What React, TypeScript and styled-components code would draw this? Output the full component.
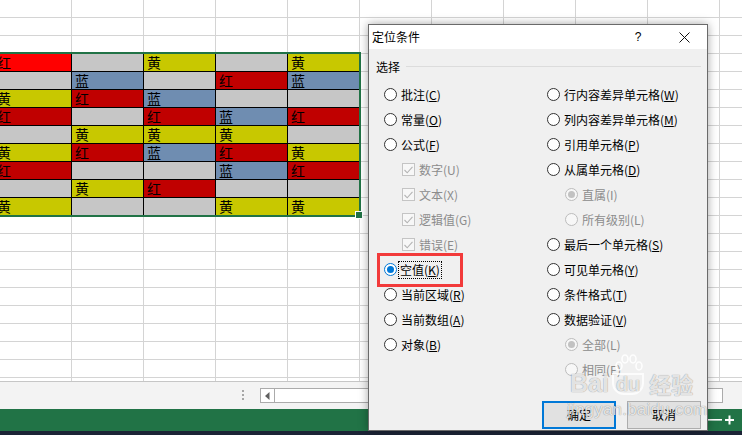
import React from "react";
import styled, { createGlobalStyle } from "styled-components";

const GlobalStyle = createGlobalStyle`
  html, body { margin: 0; padding: 0; background: #fff; }
  body { font-family: "Noto Sans CJK SC", "Noto Sans", sans-serif; }
`;

const CJK = `"Noto Sans CJK SC", "Noto Sans", sans-serif`;

const Screen = styled.div`
  position: relative;
  width: 742px;
  height: 435px;
  overflow: hidden;
  display: flex;
  flex-direction: column;
  background: #fff;
`;

const GridArea = styled.div`
  position: relative;
  height: 381px;
  flex: none;
  overflow: hidden;
`;

const Sheet = styled.div`
  display: grid;
  grid-template-columns: 78px repeat(10, 72px);
  grid-auto-rows: 18px;
  margin-left: -6px;
`;

const Cell = styled.div<{ $fill?: string; $data?: boolean }>`
  box-sizing: border-box;
  border-right: 1px solid ${(p) => (p.$data ? "#000" : "#d4d4d4")};
  border-bottom: 1px solid ${(p) => (p.$data ? "#000" : "#d4d4d4")};
  background: ${(p) => p.$fill || "#fff"};
  padding-left: 3px;
  font: 14px/17px ${CJK};
  color: #000;
  white-space: nowrap;
`;

const Selection = styled.div`
  position: absolute;
  left: -4px;
  top: 52px;
  width: 365px;
  height: 165px;
  box-sizing: border-box;
  border: 2px solid #217346;
  pointer-events: none;
`;

const FillHandle = styled.div`
  position: absolute;
  right: -4px;
  bottom: -4px;
  width: 6px;
  height: 6px;
  background: #217346;
  border: 1px solid #fff;
`;

const ScrollStrip = styled.div`
  height: 27px;
  flex: none;
  border-top: 1px solid #c6c6c6;
  background: #f3f3f3;
  display: flex;
  align-items: center;
  padding: 0 19px 0 242px;
`;

const Grip = styled.div`
  display: flex;
  flex-direction: column;
  gap: 2px;
  margin-top: -2px;
  span {
    width: 2px;
    height: 2px;
    background: #a6a6a6;
  }
`;

const ScrollBox = styled.div`
  flex: 1;
  height: 15px;
  margin-left: 16px;
  box-sizing: border-box;
  border: 1px solid #ababab;
  background: #fff;
  display: flex;
`;

const ScrollArrow = styled.div`
  width: 13px;
  border-right: 1px solid #ababab;
  display: flex;
  align-items: center;
  justify-content: center;
`;

const StatusBar = styled.div`
  height: 22px;
  flex: none;
  background: #217346;
  display: flex;
  align-items: center;
  justify-content: flex-end;
  padding-right: 8px;
`;

const Taskbar = styled.div`
  height: 4px;
  flex: none;
  background: #1c2436;
`;

const Dialog = styled.div`
  position: absolute;
  left: 368px;
  top: 24px;
  width: 340px;
  height: 407px;
  box-sizing: border-box;
  border: 1px solid #6a6a6a;
  background: #f0f0f0;
  box-shadow: 0 0 9px rgba(0, 0, 0, 0.35);
  display: flex;
  flex-direction: column;
  font: 12px/16px ${CJK};
  color: #000;
`;

const TitleBar = styled.div`
  height: 24px;
  flex: none;
  background: #fff;
  display: flex;
  align-items: center;
`;

const Title = styled.div`
  flex: 1;
  padding-left: 3px;
  font-size: 12px;
`;

const TitleButton = styled.div`
  width: 46px;
  height: 24px;
  display: flex;
  align-items: center;
  justify-content: center;
  font: 12px "Liberation Sans", sans-serif;
`;

const Body = styled.div`
  flex: 1;
  display: flex;
  flex-direction: column;
  padding: 0 6px 0 7px;
`;

const GroupHeader = styled.div`
  margin-top: 10px;
  height: 15px;
  display: flex;
  align-items: center;
  gap: 6px;
  line-height: 15px;
  &::after {
    content: "";
    flex: 1;
    height: 1px;
    background: #dcdcdc;
  }
`;

const Options = styled.div`
  display: flex;
  margin-top: 8px;
  padding-left: 8px;
`;

const Column = styled.div<{ $width?: number }>`
  display: flex;
  flex-direction: column;
  ${(p) => (p.$width ? `width: ${p.$width}px;` : "flex: 1;")}
`;

const OptionRow = styled.div<{ $indent?: boolean; $disabled?: boolean }>`
  height: 25px;
  display: flex;
  align-items: center;
  gap: 4px;
  padding-left: ${(p) => (p.$indent ? 18 : 0)}px;
  color: ${(p) => (p.$disabled ? "#8c8c8c" : "#000")};
  white-space: nowrap;
`;

const RadioCircle = styled.span<{ $checked?: boolean; $disabled?: boolean }>`
  width: 13px;
  height: 13px;
  flex: none;
  box-sizing: border-box;
  border-radius: 50%;
  border: 1px solid ${(p) => (p.$disabled ? "#bcbcbc" : p.$checked ? "#0078d7" : "#333")};
  background: ${(p) => (p.$disabled ? "#f7f7f7" : "#fff")};
  display: flex;
  align-items: center;
  justify-content: center;
  &::after {
    content: "";
    width: 7px;
    height: 7px;
    border-radius: 50%;
    background: ${(p) => (p.$disabled ? "#c2c2c2" : "#0078d7")};
    display: ${(p) => (p.$checked ? "block" : "none")};
  }
`;

const CheckBox = styled.span`
  width: 13px;
  height: 13px;
  flex: none;
  box-sizing: border-box;
  border: 1px solid #c4c4c4;
  background: #f7f7f7;
  display: flex;
  align-items: center;
  justify-content: center;
`;

const Focus = styled.span`
  outline: 1px dotted #000;
  outline-offset: 0px;
  padding: 0 1px;
  margin-left: -2px;
`;

const Key = styled.u`
  text-underline-offset: 1px;
`;

const Buttons = styled.div`
  display: flex;
  justify-content: flex-end;
  gap: 11px;
  margin-top: 19px;
`;

const Button = styled.div<{ $default?: boolean }>`
  width: 74px;
  height: 28px;
  box-sizing: border-box;
  background: #e1e1e1;
  border: ${(p) => (p.$default ? "2px solid #0078d7" : "1px solid #adadad")};
  display: flex;
  align-items: center;
  justify-content: center;
`;

const Highlight = styled.div`
  position: absolute;
  left: 8px;
  top: 228px;
  width: 86px;
  height: 34px;
  box-sizing: border-box;
  border: 3px solid #f23a3a;
  pointer-events: none;
`;

const Watermark = styled.div`
  position: absolute;
  left: 570px;
  top: 352px;
  pointer-events: none;
  color: rgba(255, 255, 255, 0.8);
  text-shadow: 0 0 1px rgba(0, 0, 0, 0.28), 0 0 1px rgba(0, 0, 0, 0.28);
  font-family: "Liberation Sans", sans-serif;
  display: flex;
  flex-direction: column;
`;

const MarkTop = styled.div`
  display: flex;
  align-items: flex-end;
  height: 43px;
  font-size: 25px;
  font-weight: bold;
  line-height: 24px;
`;

const MarkDu = styled.span`
  position: relative;
  margin: 0 3px;
  padding: 0 2px;
  border: 2px solid rgba(255, 255, 255, 0.8);
  border-radius: 0 0 12px 12px;
  font-size: 20px;
  line-height: 18px;
  svg {
    position: absolute;
    left: 0;
    bottom: 20px;
  }
`;

const MarkCn = styled.span`
  font: bold 22px/24px ${CJK};
  margin-left: 2px;
`;

const MarkUrl = styled.div`
  font-size: 17px;
  line-height: 20px;
  margin-top: 5px;
  margin-left: -3px;
  letter-spacing: 0.2px;
`;

const fills: Record<string, string> = {
  R: "#ff0000",
  r: "#c00000",
  y: "#c8c800",
  b: "#6f8db1",
  g: "#c6c6c6",
};
const words: Record<string, string> = { R: "红", r: "红", y: "黄", b: "蓝", g: "" };

const data = [
  "Rgygy",
  "gbgrb",
  "yrbgg",
  "rgrbr",
  "gyyyg",
  "yrbry",
  "rggbr",
  "gyrgg",
  "yggyy",
].map((r) => r.split(""));

type Opt = {
  label: string;
  k: string;
  check?: boolean;
  indent?: boolean;
  disabled?: boolean;
  checked?: boolean;
  focus?: boolean;
};

const leftOpts: Opt[] = [
  { label: "批注", k: "C" },
  { label: "常量", k: "O" },
  { label: "公式", k: "F" },
  { label: "数字", k: "U", check: true, indent: true, disabled: true },
  { label: "文本", k: "X", check: true, indent: true, disabled: true },
  { label: "逻辑值", k: "G", check: true, indent: true, disabled: true },
  { label: "错误", k: "E", check: true, indent: true, disabled: true },
  { label: "空值", k: "K", checked: true, focus: true },
  { label: "当前区域", k: "R" },
  { label: "当前数组", k: "A" },
  { label: "对象", k: "B" },
];

const rightOpts: Opt[] = [
  { label: "行内容差异单元格", k: "W" },
  { label: "列内容差异单元格", k: "M" },
  { label: "引用单元格", k: "P" },
  { label: "从属单元格", k: "D" },
  { label: "直属", k: "I", indent: true, disabled: true, checked: true },
  { label: "所有级别", k: "L", indent: true, disabled: true },
  { label: "最后一个单元格", k: "S" },
  { label: "可见单元格", k: "Y" },
  { label: "条件格式", k: "T" },
  { label: "数据验证", k: "V" },
  { label: "全部", k: "L", indent: true, disabled: true, checked: true },
  { label: "相同", k: "E", indent: true, disabled: true },
];

function Option({ o }: { o: Opt }) {
  const text = o.disabled ? (
    <span>{`${o.label}(${o.k})`}</span>
  ) : (
    <span>
      {o.label}(<Key>{o.k}</Key>)
    </span>
  );
  return (
    <OptionRow $indent={o.indent} $disabled={o.disabled}>
      {o.check ? (
        <CheckBox>
          <svg width="9" height="8" viewBox="0 0 9 8">
            <polyline points="0.5,4 3.2,6.8 8.5,0.8" fill="none" stroke="#b4b4b4" strokeWidth="1.1" />
          </svg>
        </CheckBox>
      ) : (
        <RadioCircle $checked={o.checked} $disabled={o.disabled} />
      )}
      {o.focus ? <Focus>{text}</Focus> : text}
    </OptionRow>
  );
}

export default function App() {
  const rows = Array.from({ length: 22 }, (_, r) => r);
  const cols = Array.from({ length: 11 }, (_, c) => c);

  return (
    <Screen>
      <GlobalStyle />
      <GridArea>
        <Sheet>
          {rows.map((r) =>
            cols.map((c) => {
              const d = r >= 3 && r <= 11 && c <= 4 ? data[r - 3][c] : null;
              return (
                <Cell key={`${r}-${c}`} $data={!!d} $fill={d ? fills[d] : undefined}>
                  {d ? words[d] : ""}
                </Cell>
              );
            })
          )}
        </Sheet>
        <Selection>
          <FillHandle />
        </Selection>
      </GridArea>
      <ScrollStrip>
        <Grip>
          <span />
          <span />
          <span />
        </Grip>
        <ScrollBox>
          <ScrollArrow>
            <svg width="5" height="8" viewBox="0 0 5 8">
              <polygon points="4.5,0 0,4 4.5,8" fill="#606060" />
            </svg>
          </ScrollArrow>
        </ScrollBox>
      </ScrollStrip>
      <StatusBar>
        <svg width="27" height="12" viewBox="0 0 27 12">
          <rect x="0" y="5" width="15" height="1.6" fill="#fff" />
          <rect x="18" y="5" width="9" height="2" fill="#fff" />
          <rect x="21.5" y="1.5" width="2" height="9" fill="#fff" />
        </svg>
      </StatusBar>
      <Taskbar />

      <Dialog>
        <TitleBar>
          <Title>定位条件</Title>
          <TitleButton>?</TitleButton>
          <TitleButton>
            <svg width="11" height="11" viewBox="0 0 11 11">
              <path d="M0.5 0.5 L10.5 10.5 M10.5 0.5 L0.5 10.5" stroke="#111" strokeWidth="1" />
            </svg>
          </TitleButton>
        </TitleBar>
        <Body>
          <GroupHeader>选择</GroupHeader>
          <Options>
            <Column $width={163}>
              {leftOpts.map((o) => (
                <Option key={o.label} o={o} />
              ))}
            </Column>
            <Column>
              {rightOpts.map((o) => (
                <Option key={o.label} o={o} />
              ))}
            </Column>
          </Options>
          <Buttons>
            <Button $default>确定</Button>
            <Button>取消</Button>
          </Buttons>
        </Body>
        <Highlight />
      </Dialog>

      <Watermark>
        <MarkTop>
          <span>Bai</span>
          <MarkDu>
            <svg width="30" height="20" viewBox="0 0 30 20">
              <g fill="none" stroke="rgba(255,255,255,0.9)" strokeWidth="1.6">
                <ellipse cx="5" cy="13" rx="3" ry="4" />
                <ellipse cx="11" cy="6" rx="3" ry="4" />
                <ellipse cx="19" cy="6" rx="3" ry="4" />
                <ellipse cx="25" cy="13" rx="3" ry="4" />
              </g>
            </svg>
            du
          </MarkDu>
          <MarkCn>经验</MarkCn>
        </MarkTop>
        <MarkUrl>jingyan.baidu.com</MarkUrl>
      </Watermark>
    </Screen>
  );
}
